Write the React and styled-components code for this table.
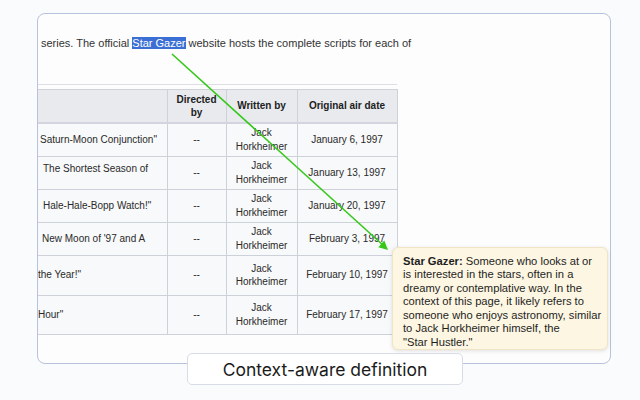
import React from 'react';
import styled, { createGlobalStyle } from 'styled-components';

const GlobalStyle = createGlobalStyle`
  body {
    margin: 0;
    background: #fafbfc;
    font-family: "Liberation Sans", Arial, sans-serif;
  }
`;

const episodes = [
  { title: 'Saturn-Moon Conjunction"', indent: 2, date: 'January 6, 1997', h: 33 },
  { title: 'The Shortest Season of', indent: 5, date: 'January 13, 1997', h: 33, lift: 8 },
  { title: 'Hale-Hale-Bopp Watch!"', indent: 5, date: 'January 20, 1997', h: 33 },
  { title: "New Moon of '97 and A", indent: 4, date: 'February 3, 1997', h: 33 },
  { title: 'the Year!"', indent: 0, date: 'February 10, 1997', h: 40 },
  { title: 'Hour"', indent: 0, date: 'February 17, 1997', h: 39 },
];

function App() {
  return (
    <Page>
      <GlobalStyle />
      <Card>
        <Paragraph>
          series. The official <Highlight>Star Gazer</Highlight> website hosts the complete scripts for each of
        </Paragraph>
        <Divider />
        <EpisodeTable>
          <colgroup>
            <col style={{ width: 129 }} />
            <col style={{ width: 59 }} />
            <col style={{ width: 71 }} />
            <col style={{ width: 100 }} />
          </colgroup>
          <thead>
            <tr>
              <th></th>
              <th>Directed<br />by</th>
              <th>Written by</th>
              <th>Original air date</th>
            </tr>
          </thead>
          <tbody>
            {episodes.map((ep) => (
              <Row key={ep.date} $h={ep.h}>
                <TitleCell $indent={ep.indent} $lift={ep.lift || 0}>{ep.title}</TitleCell>
                <td>--</td>
                <td>Jack<br />Horkheimer</td>
                <td>{ep.date}</td>
              </Row>
            ))}
          </tbody>
        </EpisodeTable>

        <Arrow width="574" height="351" viewBox="0 0 574 351">
          <line x1="135" y1="41" x2="347" y2="233" stroke="#35c81a" strokeWidth="1.6" />
          <polygon points="351,237 341.3,234.2 347.3,227.6" fill="#35c81a" />
        </Arrow>

        <Tooltip>
          <b>Star Gazer:</b> Someone who looks at or<br />
          is interested in the stars, often in a<br />
          dreamy or contemplative way. In the<br />
          context of this page, it likely refers to<br />
          someone who enjoys astronomy, similar<br />
          to Jack Horkheimer himself, the<br />
          "Star Hustler."
        </Tooltip>

        <Caption>Context-aware definition</Caption>
      </Card>
    </Page>
  );
}

const Page = styled.div`
  width: 640px;
  height: 400px;
  padding: 13px 0 0 37px;
  box-sizing: border-box;
  overflow: hidden;
`;

const Card = styled.div`
  position: relative;
  width: 574px;
  height: 351px;
  box-sizing: border-box;
  border: 1.5px solid #b8c2dc;
  border-radius: 8px;
  background: #fdfdfe;
`;

const Paragraph = styled.div`
  padding: 21px 0 0 3px;
  font-size: 11px;
  line-height: 16px;
  color: #333;
  white-space: nowrap;
`;

const Highlight = styled.span`
  background: #3b6fd4;
  color: #fff;
`;

const Divider = styled.div`
  margin-top: 33px;
  width: 359px;
  height: 1px;
  background: #dcdfe6;
`;

const EpisodeTable = styled.table`
  margin-top: 4px;
  width: 359px;
  table-layout: fixed;
  border-collapse: collapse;
  font-size: 10px;
  line-height: 13.5px;
  color: #2a2a2a;

  th, td {
    border: 1px solid #cdd1da;
    padding: 0 2px;
    text-align: center;
    vertical-align: middle;
  }

  th:first-child, td:first-child {
    border-left: none;
  }

  th {
    height: 32px;
    background: #e9eaee;
    font-weight: bold;
    color: #202122;
    border-bottom: 2px solid #d2d5dd;
  }

  td {
    background: #f8f9fa;
  }
`;

const Row = styled.tr`
  height: ${(p) => p.$h}px;
`;

const TitleCell = styled.td`
  && {
    text-align: left;
    white-space: nowrap;
    overflow: hidden;
    padding: 0 0 ${(p) => p.$lift}px ${(p) => p.$indent}px;
  }
`;

const Arrow = styled.svg`
  position: absolute;
  left: -1.5px;
  top: -1.5px;
  overflow: visible;
  pointer-events: none;
`;

const Tooltip = styled.div`
  position: absolute;
  left: 354px;
  top: 233px;
  width: 216px;
  height: 103px;
  box-sizing: border-box;
  padding: 7px 0 0 10px;
  background: #fdf6e2;
  border: 1px solid #efe4c6;
  border-radius: 6px;
  box-shadow: 0 1px 4px rgba(0, 0, 0, 0.12);
  font-size: 11.2px;
  line-height: 13.45px;
  color: #1e1e1e;
  white-space: nowrap;
`;

const Caption = styled.div`
  position: absolute;
  left: 149px;
  top: 339px;
  width: 276px;
  height: 32px;
  box-sizing: border-box;
  display: flex;
  align-items: center;
  justify-content: center;
  background: #fff;
  border: 1px solid #d8dce6;
  border-radius: 5px;
  font-family: Inter, "Noto Sans", sans-serif;
  font-size: 17.5px;
  color: #1b1b1b;
`;

export default App;
